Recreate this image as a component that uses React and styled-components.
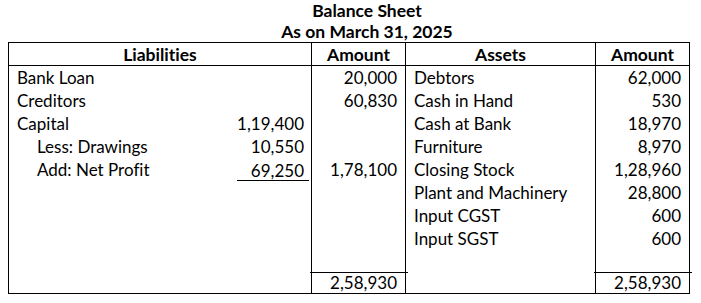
import React from 'react';
import styled, { createGlobalStyle } from 'styled-components';

const GlobalStyle = createGlobalStyle`
  body {
    margin: 0;
    background: #ffffff;
    color: #000000;
    font-family: Lato, 'Liberation Sans', sans-serif;
    font-variant-ligatures: none;
  }
`;

const Page = styled.div`
  padding: 0 8px;
  width: 682px;
`;

const Title = styled.div`
  padding-left: 36px;
  text-align: center;
  font-weight: 700;
  font-size: 17.5px;
  line-height: 21px;
`;

const Sheet = styled.table`
  border-collapse: collapse;
  table-layout: fixed;
  width: 682px;
  font-size: 17px;
  border: 1px solid #000;
`;

const HeadCell = styled.th`
  border: 1px solid #000;
  height: 22px;
  padding: 0;
  font-size: 17.5px;
  font-weight: 700;
  text-align: center;
`;

const Cell = styled.td`
  border-left: 1px solid #000;
  border-right: 1px solid #000;
  height: 23px;
  padding: 0 ${p => (p.$sub ? '2px' : '8px')} 0 8px;
  text-align: ${p => p.$align || 'left'};
  vertical-align: middle;
  white-space: nowrap;
  line-height: 20px;
`;

const TotalCell = styled(Cell)`
  height: 19px;
  position: relative;

  &::before {
    content: '';
    display: ${p => (p.$line ? 'block' : 'none')};
    position: absolute;
    top: -1px;
    left: -2px;
    right: -3px;
    border-top: 1px solid #000;
  }
`;

const LineItem = styled.div`
  display: flex;
  align-items: center;
  justify-content: space-between;
`;

const Label = styled.span`
  padding-left: ${p => (p.$indent ? '20px' : '0')};
`;

const SubAmount = styled.span`
  width: 72px;
  box-sizing: border-box;
  padding-right: 5px;
  text-align: right;
  line-height: 19px;
  border-bottom: 1px solid ${p => (p.$underline ? '#000' : 'transparent')};
  margin-bottom: ${p => (p.$underline ? '-3px' : '0')};
`;

const liabilities = [
  { label: 'Bank Loan', amount: '20,000' },
  { label: 'Creditors', amount: '60,830' },
  { label: 'Capital', sub: '1,19,400' },
  { label: 'Less: Drawings', sub: '10,550', indent: true },
  { label: 'Add: Net Profit', sub: '69,250', indent: true, underline: true, amount: '1,78,100' },
];

const assets = [
  { label: 'Debtors', amount: '62,000' },
  { label: 'Cash in Hand', amount: '530' },
  { label: 'Cash at Bank', amount: '18,970' },
  { label: 'Furniture', amount: '8,970' },
  { label: 'Closing Stock', amount: '1,28,960' },
  { label: 'Plant and Machinery', amount: '28,800' },
  { label: 'Input CGST', amount: '600' },
  { label: 'Input SGST', amount: '600' },
];

const ROWS = 9;

const App = () => {
  const rows = Array.from({ length: ROWS }, (_, i) => ({
    left: liabilities[i],
    right: assets[i],
  }));

  return (
    <Page>
      <GlobalStyle />
      <Title>Balance Sheet</Title>
      <Title>As on March 31, 2025</Title>
      <Sheet>
        <colgroup>
          <col style={{ width: 303 }} />
          <col style={{ width: 94 }} />
          <col style={{ width: 190 }} />
          <col style={{ width: 94 }} />
        </colgroup>
        <thead>
          <tr>
            <HeadCell>Liabilities</HeadCell>
            <HeadCell>Amount</HeadCell>
            <HeadCell>Assets</HeadCell>
            <HeadCell>Amount</HeadCell>
          </tr>
        </thead>
        <tbody>
          {rows.map(({ left, right }, index) => (
            <tr key={index}>
              <Cell $sub>
                {left && (
                  <LineItem>
                    <Label $indent={left.indent}>{left.label}</Label>
                    {left.sub && <SubAmount $underline={left.underline}>{left.sub}</SubAmount>}
                  </LineItem>
                )}
              </Cell>
              <Cell $align="right">{left && left.amount}</Cell>
              <Cell>{right && right.label}</Cell>
              <Cell $align="right">{right && right.amount}</Cell>
            </tr>
          ))}
          <tr>
            <TotalCell />
            <TotalCell $align="right" $line>2,58,930</TotalCell>
            <TotalCell />
            <TotalCell $align="right" $line>2,58,930</TotalCell>
          </tr>
        </tbody>
      </Sheet>
    </Page>
  );
};

export default App;
